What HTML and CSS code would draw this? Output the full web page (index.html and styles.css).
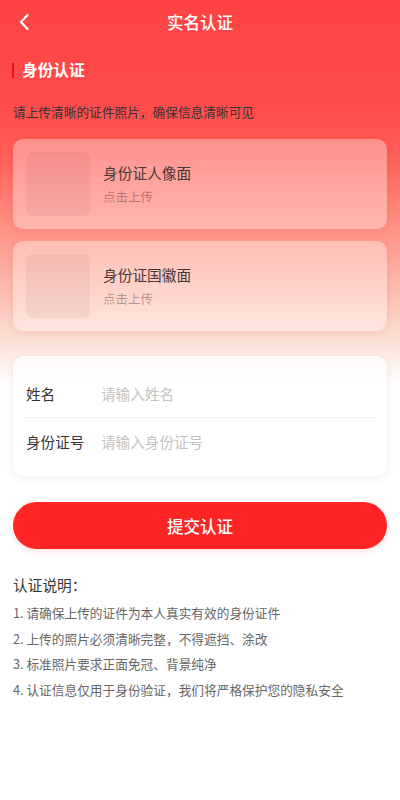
FILE: index.html
```html
<!DOCTYPE html>
<html lang="zh">
<head>
  <meta charset="UTF-8">
  <meta name="viewport" content="width=device-width, initial-scale=1.0">
  <title>实名认证</title>
  <link rel="stylesheet" href="styles.css">
</head>
<body>

  <!-- Nav bar -->
  <div class="nav">
    <span class="back">
      <svg width="12" height="18" viewBox="0 0 12 18"><path d="M9.5 2 L3 9 L9.5 16" fill="none" stroke="#fff" stroke-width="2.2" stroke-linecap="round" stroke-linejoin="round"/></svg>
    </span>
    <h1>实名认证</h1>
  </div>

  <div class="content">
    <h2 class="section-title">身份认证</h2>
    <p class="tip">请上传清晰的证件照片，确保信息清晰可见</p>

    <!-- Upload cards -->
    <div class="upload-card">
      <div class="thumb"></div>
      <div class="upload-info">
        <div class="upload-name">身份证人像面</div>
        <div class="upload-hint">点击上传</div>
      </div>
    </div>
    <div class="upload-card">
      <div class="thumb"></div>
      <div class="upload-info">
        <div class="upload-name">身份证国徽面</div>
        <div class="upload-hint">点击上传</div>
      </div>
    </div>

    <!-- Form -->
    <div class="form-card">
      <div class="form-row">
        <label>姓名</label>
        <input type="text" placeholder="请输入姓名">
      </div>
      <div class="form-row">
        <label>身份证号</label>
        <input type="text" placeholder="请输入身份证号">
      </div>
    </div>

    <button class="submit-btn">提交认证</button>

    <!-- Notes -->
    <div class="notes">
      <h3>认证说明：</h3>
      <p>1. 请确保上传的证件为本人真实有效的身份证件</p>
      <p>2. 上传的照片必须清晰完整，不得遮挡、涂改</p>
      <p>3. 标准照片要求正面免冠、背景纯净</p>
      <p>4. 认证信息仅用于身份验证，我们将严格保护您的隐私安全</p>
    </div>
  </div>

</body>
</html>
```

FILE: styles.css
```css
* {
  margin: 0;
  padding: 0;
  box-sizing: border-box;
}

body {
  font-family: "Noto Sans CJK SC", "Noto Sans", sans-serif;
  width: 400px;
  min-height: 800px;
  background: linear-gradient(180deg, #ff4345 0px, #ff4a4a 100px, #ff5b56 150px, #ff9a8c 240px, #fcd8cc 330px, #fff 385px, #fff 800px);
  color: #333;
}

.nav {
  height: 44px;
  display: flex;
  align-items: center;
  justify-content: center;
  position: relative;
}

.nav h1 {
  font-size: 16.5px;
  font-weight: 500;
  color: #fff;
}

.back {
  position: absolute;
  left: 18px;
  top: 13px;
  display: flex;
}

.content {
  padding: 0 13px;
}

.section-title {
  margin-top: 15px;
  height: 22px;
  line-height: 22px;
  font-size: 15.7px;
  font-weight: bold;
  color: #fff;
  padding-left: 9px;
  position: relative;
}

.section-title::before {
  content: '';
  position: absolute;
  left: -1px;
  top: 4px;
  width: 2px;
  height: 15px;
  background-color: #e8141a;
}

.tip {
  margin-top: 21px;
  font-size: 12.7px;
  line-height: 20px;
  color: #333;
}

.upload-card {
  margin-top: 17px;
  height: 90px;
  padding: 13px;
  display: flex;
  align-items: center;
  gap: 13px;
  background-color: rgba(255, 255, 255, 0.35);
  border-radius: 10px;
  box-shadow: 0 2px 8px rgba(180, 60, 50, 0.12);
}

.upload-card + .upload-card {
  margin-top: 12px;
}

.thumb {
  width: 64px;
  height: 64px;
  border-radius: 7px;
  background-color: rgba(120, 60, 60, 0.07);
}

.upload-name {
  font-size: 14.7px;
  line-height: 20px;
  color: #4a3636;
  margin-bottom: 5px;
}

.upload-hint {
  font-size: 12.5px;
  line-height: 17px;
  color: rgba(80, 40, 40, 0.42);
}

.form-card {
  margin-top: 25px;
  padding: 14px 13px 11px;
  background-color: rgba(255, 255, 255, 0.75);
  border-radius: 10px;
  box-shadow: 0 2px 8px rgba(0, 0, 0, 0.08);
}

.form-row {
  height: 47px;
  display: flex;
  align-items: center;
}

.form-row + .form-row {
  border-top: 1px solid #eee;
  height: 48px;
}

.form-row label {
  width: 75px;
  font-size: 14.6px;
  color: #333;
}

.form-row input {
  flex: 1;
  border: none;
  outline: none;
  background: transparent;
  font-family: inherit;
  font-size: 14.6px;
  color: #333;
}

.form-row input::placeholder {
  color: #c2c2c2;
}

.submit-btn {
  display: block;
  width: 100%;
  height: 47px;
  margin-top: 26px;
  border: none;
  border-radius: 24px;
  background-color: #ff2525;
  color: #fff;
  font-family: inherit;
  font-size: 16.5px;
  font-weight: 500;
  box-shadow: 0 2px 6px rgba(255, 37, 37, 0.15);
}

.notes {
  margin-top: 25px;
}

.notes h3 {
  font-size: 14.7px;
  font-weight: normal;
  line-height: 22px;
  color: #333;
  margin-bottom: 4px;
}

.notes p {
  font-size: 12.7px;
  line-height: 25.5px;
  color: #666;
}
```
